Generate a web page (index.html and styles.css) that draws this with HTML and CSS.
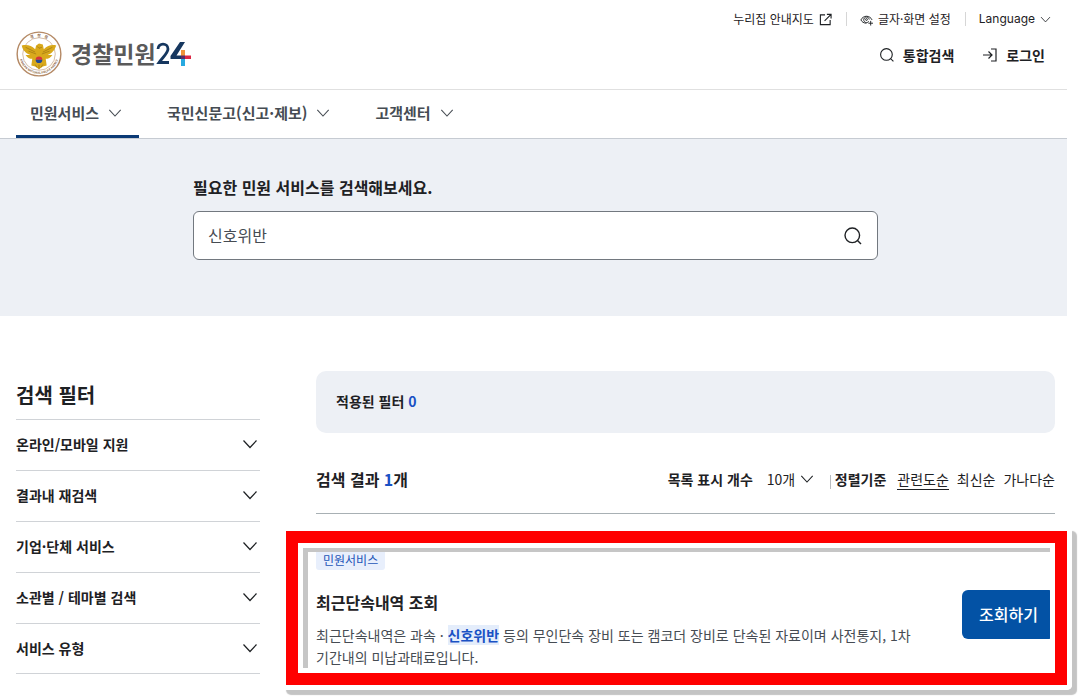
FILE: index.html
```html
<!DOCTYPE html>
<html lang="ko">
<head>
    <meta charset="UTF-8">
    <meta name="viewport" content="width=device-width, initial-scale=1.0">
    <title>경찰민원24 - 통합검색</title>
    <link rel="stylesheet" href="styles.css">
</head>
<body>
    <!-- Shared icons -->
    <svg class="sprite" aria-hidden="true">
        <symbol id="chevron" viewBox="0 0 16 16">
            <path d="M1.5 4.5 8 11.5l6.5-7" fill="none" stroke="currentColor" stroke-width="1.2"/>
        </symbol>
        <symbol id="search" viewBox="0 0 20 20">
            <circle cx="9.3" cy="9.3" r="7.3" fill="none" stroke="currentColor" stroke-width="1.4"/>
            <path d="M14.5 14.5 18 18" fill="none" stroke="currentColor" stroke-width="1.4"/>
        </symbol>
    </svg>

    <div class="page">
        <header class="header">
            <div class="header-inner">
                <a href="#" class="logo" aria-label="경찰민원24">
                    <svg class="emblem" viewBox="0 0 48 48">
                        <defs>
                            <path id="ringTop" d="M6 24a18 18 0 0 1 36 0"/>
                            <path id="ringBottom" d="M3.8 20a20.6 20.6 0 1 0 40.4 0"/>
                        </defs>
                        <circle cx="24" cy="24" r="22.8" fill="#fff" stroke="#b58a66" stroke-width="1.5"/>
                        <circle cx="24" cy="24" r="17" fill="none" stroke="#c9a98e" stroke-width="0.8"/>
                        <text class="ring-ko"><textPath href="#ringTop" startOffset="50%">경 &#160; 찰 &#160; 청</textPath></text>
                        <text class="ring-en"><textPath href="#ringBottom" startOffset="50%">KOREAN NATIONAL POLICE AGENCY</textPath></text>
                        <path d="M6 15c6-1 10 0 14 4l1-4 3-2 4 1 1 5c4-4 8-5 13-4-2 5-4 8-9 10l5 0c-2 3-4 4-7 4l1 7-4 1-4 3-4-3-4-1 1-7c-3 0-5-1-7-4l5 0c-5-2-8-5-9-10z" fill="#d9a91c"/>
                        <path d="M10 17l10 5M13 21l8 3M38 17l-10 5M35 21l-8 3M20 35l2 3M24 35v5M28 35l-2 3M22 16l2 2 3-1" stroke="#9c7410" stroke-width="0.7" fill="none"/>
                        <path d="M20.500 30a3.500 3.500 0 0 1 7 0z" fill="#d8323c"/>
                        <path d="M20.500 30a3.500 3.500 0 0 0 7 0z" fill="#234a93"/>
                    </svg>
                    <span class="logo-name">경찰민원</span>
                    <svg class="logo-24" viewBox="0 0 36 26">
                        <path d="M2 8C2 1.500 12 1.500 12 8c0 4-5 8-9 13.500H13" fill="none" stroke="#16375f" stroke-width="2.800"/>
                        <path d="M24 1h5L20.500 14.500H25V18H14.500v-3z" fill="#16375f"/>
                        <path d="M25 9h4v6h-4z" fill="#f0923a"/>
                        <path d="M25 18h4v7h-4z" fill="#27a9e0"/>
                        <path d="M25 14.500h4V18h-4z" fill="#5b2a68"/>
                        <path d="M29 14.500h6V18h-6z" fill="#dc2745"/>
                    </svg>
                </a>
                <div class="header-tools">
                    <ul class="util-list">
                        <li>
                            <a href="#">누리집 안내지도
                                <svg class="icon-util" viewBox="0 0 14 14" fill="none" stroke="currentColor" stroke-width="1.2"><path d="M6.500 2H1.500v10.500H12V7.500M8.500 1.500H13V6M13 1.500 6 8.500"/></svg>
                            </a>
                        </li>
                        <li>
                            <a href="#">
                                <svg class="icon-util" viewBox="0 0 14 14" fill="none" stroke="currentColor"><path d="M7 11C4 11 2 9.500 1 7.500 2 5 4.500 3.500 7 3.500s5 1.500 6 4M9.500 9A3 3 0 1 1 10 7M8 7a1 1 0 1 0-2 0 1 1 0 0 0 2 0M11.500 8.500v5M9 11h5"/></svg>
                                글자·화면 설정</a>
                        </li>
                        <li>
                            <button type="button" class="lang">Language <svg class="icon-caret"><use href="#chevron"/></svg></button>
                        </li>
                    </ul>
                    <div class="actions">
                        <button type="button"><svg class="icon-action"><use href="#search"/></svg>통합검색</button>
                        <a href="#"><svg class="icon-action" viewBox="0 0 16 16" fill="none" stroke="currentColor" stroke-width="1.200"><path d="M9 2h5v12H9M1 8h9M6.500 4.500 10 8l-3.500 3.500"/></svg>로그인</a>
                    </div>
                </div>
            </div>
            <nav class="gnb">
                <button type="button" class="active">민원서비스 <svg class="icon-nav"><use href="#chevron"/></svg></button>
                <button type="button">국민신문고(신고·제보) <svg class="icon-nav"><use href="#chevron"/></svg></button>
                <button type="button">고객센터 <svg class="icon-nav"><use href="#chevron"/></svg></button>
            </nav>
        </header>

        <!-- Search area -->
        <section class="search-area">
            <form class="search-form">
                <label for="keyword">필요한 민원 서비스를 검색해보세요.</label>
                <div class="search-box">
                    <input type="text" id="keyword" value="신호위반">
                    <button type="button" aria-label="검색"><svg><use href="#search"/></svg></button>
                </div>
            </form>
        </section>

        <main class="content">
            <aside class="filter">
                <h2>검색 필터</h2>
                <button type="button">온라인/모바일 지원 <svg><use href="#chevron"/></svg></button>
                <button type="button">결과내 재검색 <svg><use href="#chevron"/></svg></button>
                <button type="button">기업·단체 서비스 <svg><use href="#chevron"/></svg></button>
                <button type="button">소관별 / 테마별 검색 <svg><use href="#chevron"/></svg></button>
                <button type="button">서비스 유형 <svg><use href="#chevron"/></svg></button>
            </aside>

            <section class="results">
                <div class="applied">적용된 필터 <span class="count">0</span></div>
                <div class="result-head">
                    <h3>검색 결과 <span class="count">1</span>개</h3>
                    <div class="sort">
                        <label for="pageSize">목록 표시 개수</label>
                        <span class="select-wrap">
                            <select id="pageSize">
                                <option>10개</option>
                            </select>
                            <svg><use href="#chevron"/></svg>
                        </span>
                        <strong>정렬기준</strong>
                        <a href="#" class="on">관련도순</a>
                        <a href="#">최신순</a>
                        <a href="#">가나다순</a>
                    </div>
                </div>

                <article class="result-item">
                    <div class="result-text">
                        <span class="tag">민원서비스</span>
                        <h4>최근단속내역 조회</h4>
                        <p>최근단속내역은 과속 · <mark>신호위반</mark> 등의 무인단속 장비 또는 캠코더 장비로 단속된 자료이며 사전통지, 1차 기간내의 미납과태료입니다.</p>
                    </div>
                    <button type="button" class="btn-view">조회하기</button>
                    <div class="marker"><div class="marker-line"></div></div>
                </article>
            </section>
        </main>
    </div>
</body>
</html>
```
FILE: styles.css
```css
*,
*::after {
    margin: 0;
    padding: 0;
    box-sizing: border-box;
}

body {
    min-height: 100vh;
    font-family: "Noto Sans CJK KR", sans-serif;
    font-size: 15px;
    color: #1e2124;
    background-color: #fff;
}

a {
    color: inherit;
    text-decoration: none;
}

button,
input,
select {
    font: inherit;
    color: inherit;
    border: none;
    background: none;
}

button {
    cursor: pointer;
}

.sprite {
    display: none;
}

.page {
    margin-right: 13px;
}

/* Header */
.header-inner {
    display: flex;
    justify-content: space-between;
    height: 89px;
    padding: 8px 16px 0;
}

.logo {
    display: flex;
    align-items: center;
    height: 92px;
}

.emblem {
    width: 46px;
    height: 46px;
}

.ring-ko,
.ring-en {
    text-anchor: middle;
    fill: #8a6242;
    font-weight: bold;
}

.ring-ko {
    font-size: 4px;
}

.ring-en {
    font-size: 3px;
}

.logo-name {
    margin-left: 9px;
    padding-bottom: 3px;
    font-size: 23px;
    font-weight: bold;
    color: #5a5a5a;
}

.logo-24 {
    width: 36px;
    height: 26px;
}

.util-list {
    display: flex;
    justify-content: flex-end;
    list-style: none;
    font-size: 12px;
    line-height: 22px;
}

.util-list li + li {
    margin-left: 14px;
    padding-left: 14px;
    background: linear-gradient(#d6d6d6, #d6d6d6) left center / 1px 14px no-repeat;
}

.util-list a,
.util-list button {
    display: flex;
    align-items: center;
    gap: 5px;
}

.util-list .lang {
    font-family: Inter, sans-serif;
}

.icon-util {
    width: 13px;
    height: 13px;
}

.icon-caret {
    width: 11px;
    height: 11px;
}

.actions {
    display: flex;
    justify-content: flex-end;
    gap: 28px;
    margin-top: 13px;
    padding-right: 6px;
    font-weight: bold;
    font-size: 14px;
    line-height: 24px;
}

.actions a,
.actions button {
    display: flex;
    align-items: center;
    gap: 8px;
}

.icon-action {
    width: 16px;
    height: 16px;
}

.gnb {
    display: flex;
    gap: 14px;
    padding: 0 16px;
    border-top: 1px solid #e0e0e0;
    border-bottom: 1px solid #c6cbd2;
}

.gnb button {
    display: flex;
    align-items: center;
    gap: 9px;
    height: 48px;
    padding: 0 17px 0 14px;
    border-bottom: 3px solid transparent;
    font-size: 15px;
    font-weight: bold;
    color: #464c53;
}

.gnb .active {
    border-bottom-color: #0b3a75;
}

.icon-nav {
    width: 14px;
    height: 14px;
}

/* Search area */
.search-area {
    padding: 36px 189px 56px 193px;
    background-color: #edf0f5;
}

.search-form label {
    display: block;
    margin-bottom: 12px;
    font-size: 16px;
    font-weight: bold;
    line-height: 24px;
}

.search-box {
    display: flex;
    align-items: center;
    height: 49px;
    padding: 0 14px;
    background-color: #fff;
    border: 1px solid #72787f;
    border-radius: 6px;
}

.search-box input {
    flex: 1;
    padding-bottom: 2px;
    font-size: 16px;
    color: #464c53;
    outline: none;
}

.search-box svg {
    display: block;
    width: 20px;
    height: 20px;
}

/* Content */
.content {
    display: grid;
    grid-template-columns: 244px 1fr;
    gap: 56px;
    padding: 55px 12px 20px 16px;
}

.filter h2 {
    padding: 8px 0;
    font-size: 20px;
    line-height: 32px;
}

.filter button {
    display: flex;
    justify-content: space-between;
    align-items: center;
    width: 100%;
    height: 51px;
    padding: 0 2px 2px 0;
    border-top: 1px solid #d0d3d7;
    font-size: 14px;
    font-weight: bold;
}

.filter button:last-child {
    border-bottom: 1px solid #d0d3d7;
}

.filter svg {
    width: 16px;
    height: 16px;
}

.applied {
    padding: 18px 20px 20px;
    border-radius: 10px;
    background-color: #edf0f5;
    font-size: 14px;
    font-weight: bold;
    line-height: 24px;
}

.count {
    color: #1a51c4;
}

.result-head {
    display: flex;
    justify-content: space-between;
    align-items: center;
    height: 81px;
    padding-top: 12px;
    border-bottom: 1px solid #a8b0b4;
}

.result-head h3 {
    font-size: 16px;
}

.sort {
    display: flex;
    align-items: center;
    gap: 8px;
    font-size: 14px;
}

.sort label {
    font-weight: bold;
}

.sort strong {
    margin-right: 3px;
    padding-left: 5px;
    background: linear-gradient(#b8bcc0, #b8bcc0) left bottom / 1px 14px no-repeat;
}

.select-wrap {
    display: flex;
    align-items: center;
    gap: 4px;
    margin: 0 8px 0 6px;
}

.select-wrap select {
    appearance: none;
    outline: none;
}

.select-wrap svg {
    width: 14px;
    height: 14px;
    pointer-events: none;
}

.sort .on {
    border-bottom: 1px solid #1e2124;
}

/* Result */
.result-item {
    position: relative;
    display: flex;
    justify-content: space-between;
    align-items: flex-end;
    padding-top: 35px;
}

.result-text {
    max-width: 600px;
}

.tag {
    display: block;
    width: fit-content;
    padding: 1px 7px 0;
    border-radius: 3px;
    background-color: #e8effc;
    font-size: 12px;
    line-height: 20px;
    color: #2456b8;
}

.result-item h4 {
    margin: 20px 0 10px;
    font-size: 16px;
    line-height: 24px;
}

.result-item p {
    font-size: 14px;
    line-height: 22px;
    color: #464c53;
}

.result-item mark {
    background-color: #e4edfb;
    font-weight: bold;
    color: #1a51c4;
}

.btn-view {
    width: 93px;
    height: 49px;
    margin-bottom: 29px;
    padding-bottom: 2px;
    border-radius: 6px;
    background-color: #0352a5;
    font-size: 16px;
    font-weight: 500;
    color: #fff;
}

/* Red frame over the found service */
.marker {
    position: absolute;
    inset: 12px -17px auto -35px;
    height: 164px;
    border: 5px solid #fff;
    border-radius: 5px;
    box-shadow: 5px 5px 1px #c4c4c4;
    pointer-events: none;
}

.marker-line {
    height: 100%;
    border: 12px solid #f00;
}

.marker-line::after {
    content: "";
    display: block;
    height: 100%;
    border: 5px solid #fff;
    box-shadow: inset 5px 4px 0 #c6c6c6;
}
```
